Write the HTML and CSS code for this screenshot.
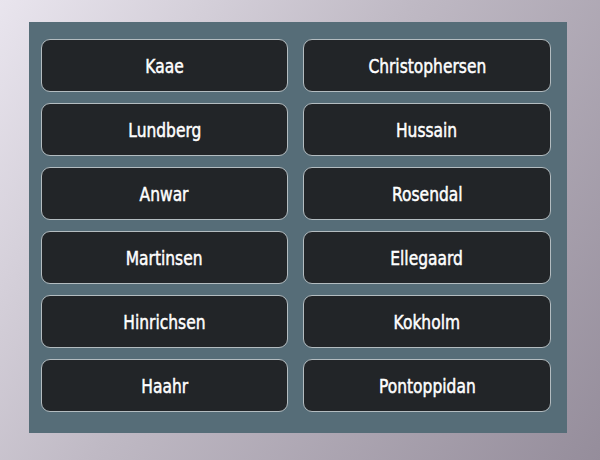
FILE: index.html
```html
<!DOCTYPE html>
<html lang="en">
<head>
    <meta charset="UTF-8">
    <meta name="viewport" content="width=device-width, initial-scale=1.0">
    <title>Names</title>
    <link rel="stylesheet" href="styles.css">
</head>
<body>
    <div class="panel">
        <button class="name-button"><span class="label">Kaae</span></button>
        <button class="name-button"><span class="label">Christophersen</span></button>
        <button class="name-button"><span class="label">Lundberg</span></button>
        <button class="name-button"><span class="label">Hussain</span></button>
        <button class="name-button"><span class="label">Anwar</span></button>
        <button class="name-button"><span class="label">Rosendal</span></button>
        <button class="name-button"><span class="label">Martinsen</span></button>
        <button class="name-button"><span class="label">Ellegaard</span></button>
        <button class="name-button"><span class="label">Hinrichsen</span></button>
        <button class="name-button"><span class="label">Kokholm</span></button>
        <button class="name-button"><span class="label">Haahr</span></button>
        <button class="name-button"><span class="label">Pontoppidan</span></button>
    </div>
</body>
</html>
```
FILE: styles.css
```css
html {
    height: 100%;
}

body {
    margin: 0;
    height: 100%;
    font-family: 'DejaVu Sans', sans-serif;
    background: linear-gradient(125deg, #e9e5ee 0%, #bfb9c4 45%, #958d9b 100%);
    padding: 22px 0 0 29px;
    box-sizing: border-box;
}

.panel {
    width: 538px;
    height: 411px;
    box-sizing: border-box;
    background: #566d78;
    padding: 17px 16px 21px 12px;
    display: grid;
    grid-template-columns: 247px 248px;
    grid-auto-rows: 53px;
    column-gap: 15px;
    row-gap: 11px;
}

.name-button {
    display: flex;
    justify-content: center;
    align-items: center;
    background: #222528;
    color: #ffffff;
    border: 1px solid #b3bcc0;
    border-radius: 9px;
    font-family: inherit;
    font-size: 19px;
    cursor: pointer;
}

/* names look narrow in the design */
.label {
    display: inline-block;
    transform: scaleX(0.815);
    -webkit-text-stroke: 0.5px #ffffff;
}
```
